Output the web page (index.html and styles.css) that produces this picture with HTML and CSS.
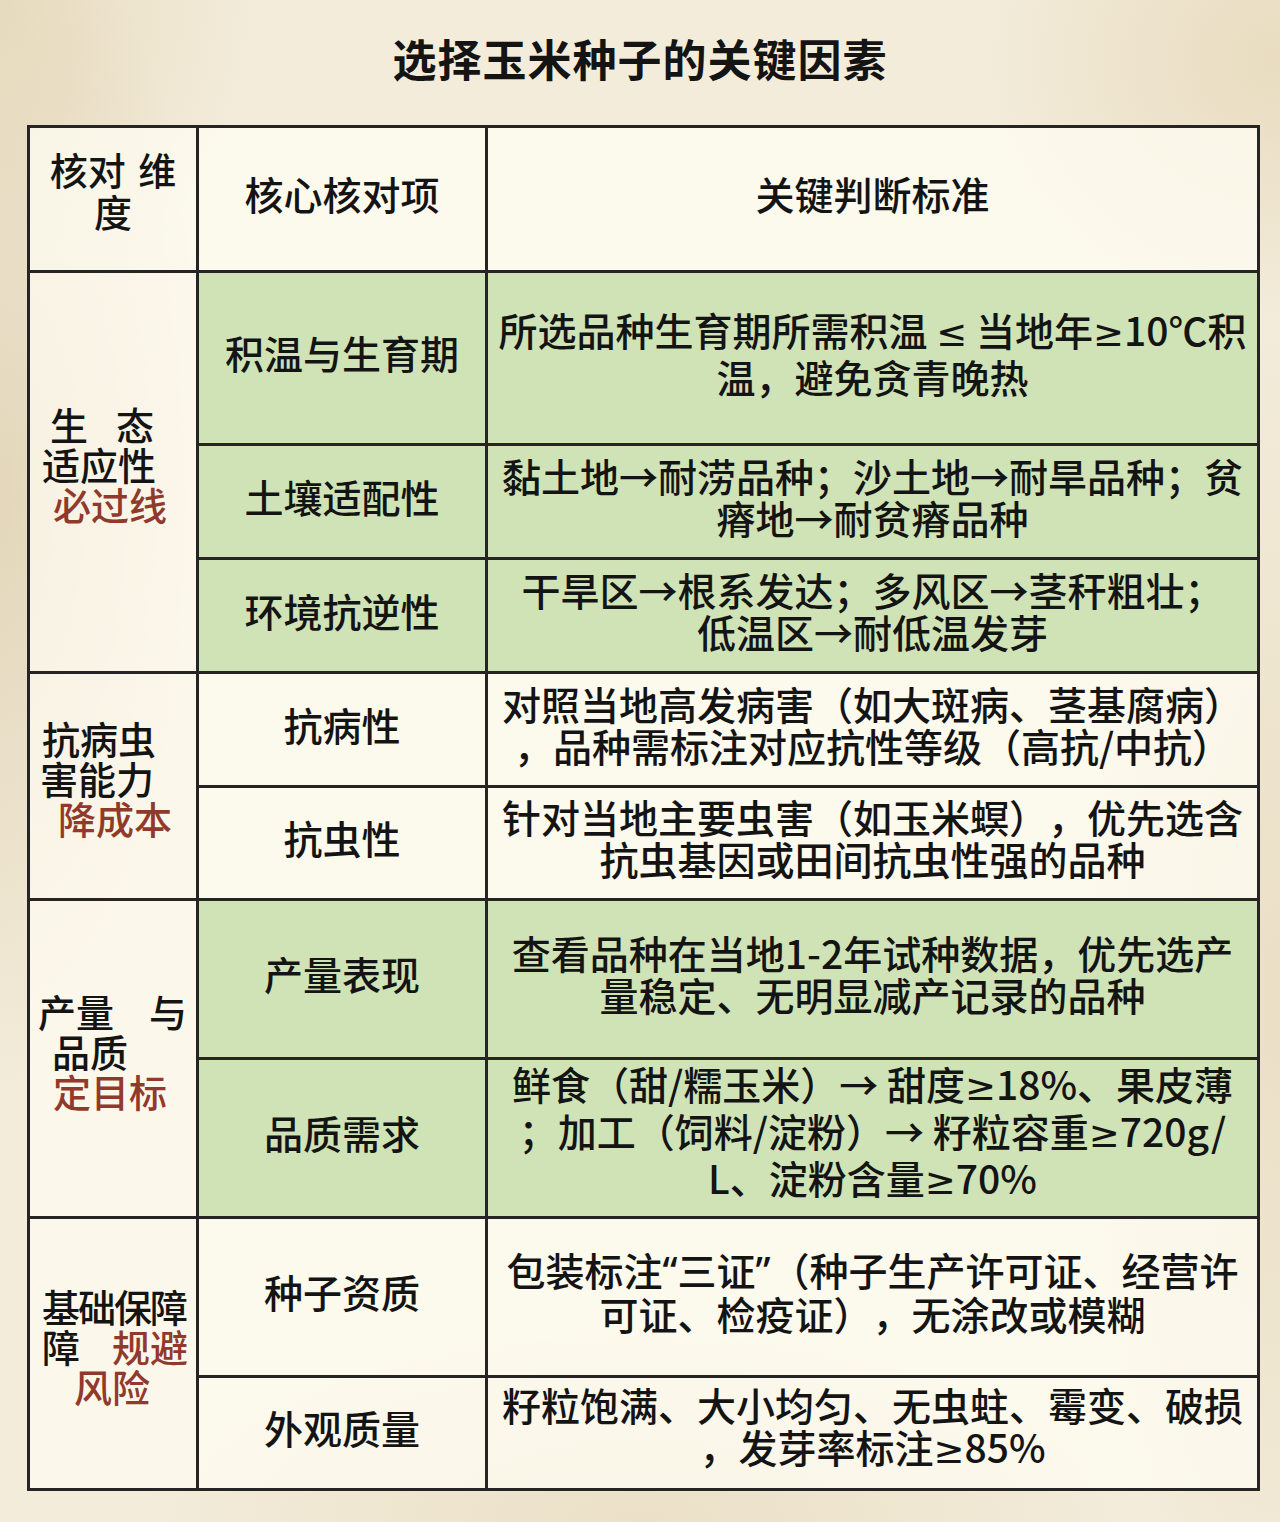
FILE: index.html
```html
<!DOCTYPE html>
<html lang="zh-CN">
<head>
<meta charset="utf-8">
<title>选择玉米种子的关键因素</title>
<link rel="stylesheet" href="styles.css">
</head>
<body>
<div class="page">
  <h1 class="title">选择玉米种子的关键因素</h1>
  <table class="grid">
    <colgroup>
      <col class="col-dim">
      <col class="col-item">
      <col class="col-rule">
    </colgroup>
    <tr class="r-head">
      <th class="cell head-dim"><span class="ln">核对 维</span><span class="ln">度</span></th>
      <th class="cell">核心核对项</th>
      <th class="cell">关键判断标准</th>
    </tr>
    <tr class="r-173 green">
      <td class="cell dim" rowspan="3">
        <span class="ln g1a"><span>生</span><span>态</span></span>
        <span class="ln">适应性</span>
        <span class="ln red g1c">必过线</span>
      </td>
      <td class="cell">积温与生育期</td>
      <td class="cell">所选品种生育期所需积温 <span class="sym">≤</span> 当地年<span class="sym">≥</span>10℃积<br>温，避免贪青晚热</td>
    </tr>
    <tr class="r-114 green">
      <td class="cell">土壤适配性</td>
      <td class="cell">黏土地→耐涝品种；沙土地→耐旱品种；贫<br>瘠地→耐贫瘠品种</td>
    </tr>
    <tr class="r-114 green">
      <td class="cell">环境抗逆性</td>
      <td class="cell">干旱区→根系发达；多风区→茎秆粗壮；<br>低温区→耐低温发芽</td>
    </tr>
    <tr class="r-114 plain">
      <td class="cell dim" rowspan="2">
        <span class="ln">抗病虫</span>
        <span class="ln g2b">害能力</span>
        <span class="ln red g2c">降成本</span>
      </td>
      <td class="cell">抗病性</td>
      <td class="cell">对照当地高发病害（如大斑病、茎基腐病）<br>，品种需标注对应抗性等级（高抗/中抗）</td>
    </tr>
    <tr class="r-113 plain">
      <td class="cell">抗虫性</td>
      <td class="cell">针对当地主要虫害（如玉米螟），优先选含<br>抗虫基因或田间抗虫性强的品种</td>
    </tr>
    <tr class="r-159 green">
      <td class="cell dim" rowspan="2">
        <span class="ln g3a"><span>产量</span><span>与</span></span>
        <span class="ln g3b">品质</span>
        <span class="ln red g3c">定目标</span>
      </td>
      <td class="cell">产量表现</td>
      <td class="cell">查看品种在当地1-2年试种数据，优先选产<br>量稳定、无明显减产记录的品种</td>
    </tr>
    <tr class="r-159 green">
      <td class="cell">品质需求</td>
      <td class="cell">鲜食（甜/糯玉米）→ 甜度<span class="sym">≥</span>18%、果皮薄<br>；加工（饲料/淀粉）→ 籽粒容重<span class="sym">≥</span>720g/<br>L、淀粉含量<span class="sym">≥</span>70%</td>
    </tr>
    <tr class="r-159 plain">
      <td class="cell dim" rowspan="2">
        <span class="ln g4a">基础保障</span>
        <span class="ln g4b"><span>障</span><span class="red">规避</span></span>
        <span class="ln red g4c">风险</span>
      </td>
      <td class="cell">种子资质</td>
      <td class="cell">包装标注<span class="quote">“</span>三证<span class="quote">”</span>（种子生产许可证、经营许<br>可证、检疫证），无涂改或模糊</td>
    </tr>
    <tr class="r-113 plain">
      <td class="cell">外观质量</td>
      <td class="cell">籽粒饱满、大小均匀、无虫蛀、霉变、破损<br>，发芽率标注<span class="sym">≥</span>85%</td>
    </tr>
  </table>
</div>
</body>
</html>
```
FILE: styles.css
```css
html, body {
  margin: 0;
  padding: 0;
}

body {
  width: 1280px;
  min-height: 1522px;
  font-family: "Noto Sans CJK SC", "Noto Sans", sans-serif;
  color: #141414;
  background-color: #f3ecda;
  background-image:
    radial-gradient(ellipse 220px 600px at 0px 500px, rgba(214, 196, 160, 0.55), rgba(214, 196, 160, 0) 100%),
    radial-gradient(ellipse 300px 260px at 1280px 60px, rgba(220, 200, 160, 0.45), rgba(220, 200, 160, 0) 100%),
    radial-gradient(ellipse 260px 300px at 0px 0px, rgba(222, 205, 168, 0.5), rgba(222, 205, 168, 0) 100%),
    radial-gradient(ellipse 500px 200px at 640px 1522px, rgba(226, 210, 176, 0.45), rgba(226, 210, 176, 0) 100%),
    radial-gradient(ellipse 200px 700px at 1280px 1000px, rgba(224, 208, 172, 0.45), rgba(224, 208, 172, 0) 100%);
}

.page {
  width: 1280px;
  height: 1522px;
  box-sizing: border-box;
  padding-left: 27px;
}

.title {
  margin: 0;
  height: 125px;
  box-sizing: border-box;
  padding-top: 33px;
  padding-right: 27px;
  font-size: 44px;
  line-height: 50px;
  font-weight: 700;
  text-align: center;
  letter-spacing: 1px;
}

.grid {
  width: 1230px;
  border-collapse: collapse;
  table-layout: fixed;
}

.col-dim { width: 169px; }
.col-item { width: 289px; }
.col-rule { width: 772px; }

.cell {
  border: 3px solid #262524;
  padding: 0 2px 12px;
  text-align: center;
  vertical-align: middle;
  font-size: 39px;
  line-height: 42px;
  font-weight: 500;
  white-space: nowrap;
  overflow: visible;
  text-spacing-trim: space-all;
}

.r-head { height: 145px; }
.r-173 { height: 173px; }
.r-114 { height: 114px; }
.r-113 { height: 113px; }
.r-159 { height: 159px; }

.r-head .cell,
.plain .cell {
  background: rgba(255, 253, 244, 0.72);
}

.green .cell {
  background: #cfe3b6;
}

.green .dim,
.plain .dim {
  background: rgba(255, 252, 242, 0.7);
}

.head-dim {
  padding-bottom: 18px;
  word-spacing: 4px;
  font-size: 38px;
}

.sym {
  font-family: "DejaVu Sans", "Noto Sans", sans-serif;
  font-weight: 400;
  font-size: 37px;
}

.quote {
  font-family: "Noto Sans", "DejaVu Sans", sans-serif;
  font-weight: 500;
}

.ln {
  display: block;
}

.dim {
  text-align: left;
  padding-left: 12px;
  padding-bottom: 16px;
  font-size: 38px;
  line-height: 40px;
}

.red {
  color: #913a2b;
}

.g1a {
  display: flex;
  justify-content: space-between;
  width: 104px;
  margin-left: 8px;
}

.g1c { margin-left: 11px; }
.g2b { margin-left: -2px; }
.g2c { margin-left: 16px; }

.g3a {
  display: flex;
  justify-content: space-between;
  width: 149px;
  margin-left: -4px;
}

.g3b { margin-left: 10px; }
.g3c { margin-left: 11px; }

.g4a { letter-spacing: -2px; }

.g4b {
  display: flex;
  justify-content: space-between;
  width: 146px;
}

.g4c { margin-left: 32px; }
```
